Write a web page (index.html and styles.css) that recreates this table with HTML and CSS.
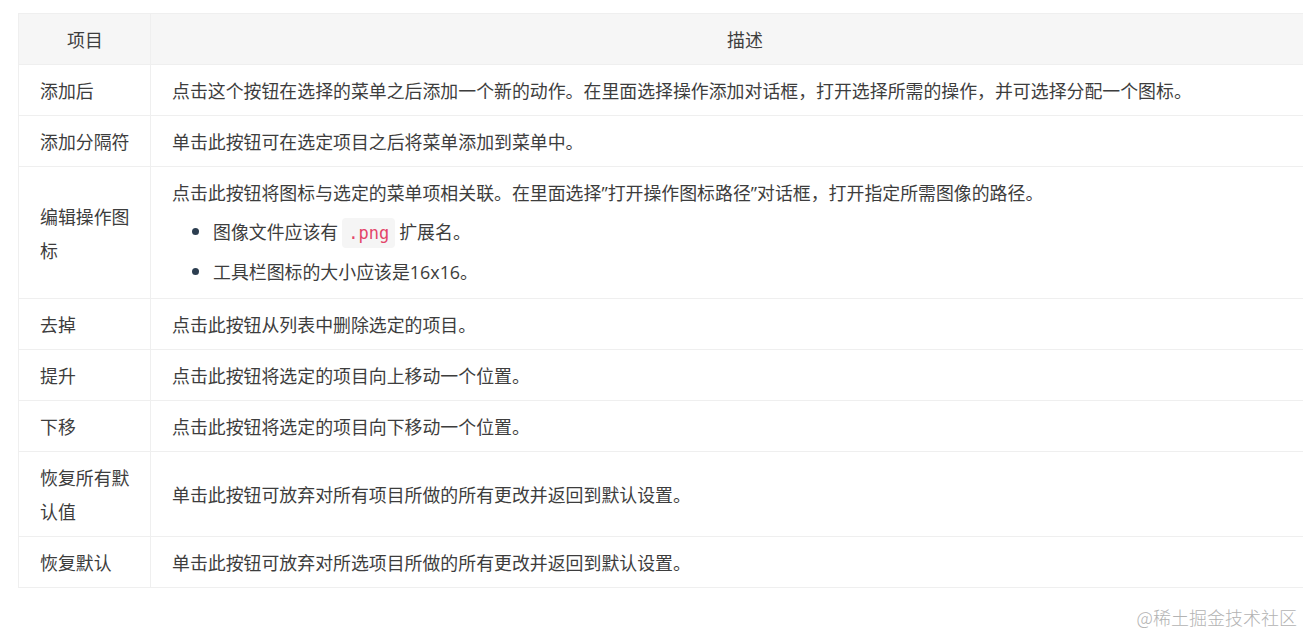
FILE: index.html
```html
<!DOCTYPE html>
<html lang="zh-CN">
<head>
<meta charset="utf-8">
<title>表格</title>
<link rel="stylesheet" href="styles.css">
</head>
<body>
<div class="page">
  <table class="doc-table">
    <thead>
      <tr><th class="col-item">项目</th><th class="col-desc">描述</th></tr>
    </thead>
    <tbody>
      <tr><td class="col-item">添加后</td><td>点击这个按钮在选择的菜单之后添加一个新的动作。在里面选择操作添加对话框，打开选择所需的操作，并可选择分配一个图标。</td></tr>
      <tr><td class="col-item">添加分隔符</td><td>单击此按钮可在选定项目之后将菜单添加到菜单中。</td></tr>
      <tr>
        <td class="col-item">编辑操作图标</td>
        <td>
          <p class="cell-p">点击此按钮将图标与选定的菜单项相关联。在里面选择<span class="latin">”</span>打开操作图标路径<span class="latin">”</span>对话框，打开指定所需图像的路径。</p>
          <ul class="cell-list">
            <li>图像文件应该有 <code class="inline-code">.png</code> 扩展名。</li>
            <li>工具栏图标的大小应该是<span class="latin">16x16</span>。</li>
          </ul>
        </td>
      </tr>
      <tr><td class="col-item">去掉</td><td>点击此按钮从列表中删除选定的项目。</td></tr>
      <tr><td class="col-item">提升</td><td>点击此按钮将选定的项目向上移动一个位置。</td></tr>
      <tr><td class="col-item">下移</td><td>点击此按钮将选定的项目向下移动一个位置。</td></tr>
      <tr><td class="col-item">恢复所有默认值</td><td>单击此按钮可放弃对所有项目所做的所有更改并返回到默认设置。</td></tr>
      <tr><td class="col-item">恢复默认</td><td>单击此按钮可放弃对所选项目所做的所有更改并返回到默认设置。</td></tr>
    </tbody>
  </table>
  <div class="watermark">@稀土掘金技术社区</div>
</div>
</body>
</html>
```

FILE: styles.css
```css
html, body {
  margin: 0;
  padding: 0;
  overflow: hidden;
  background: #fff;
}
.page {
  padding: 13px 0 0 18px;
  width: 1400px;
  font-family: "Noto Sans CJK SC", "Noto Sans", sans-serif;
  color: #3d3d3d;
}
.doc-table {
  border-collapse: collapse;
  table-layout: fixed;
  width: 1322px;
  font-size: 17.9px;
  line-height: 34px;
}
.doc-table th,
.doc-table td {
  border: 1px solid #efefef;
  padding: 8px 21px;
  text-align: left;
  vertical-align: middle;
  font-weight: normal;
}
.doc-table .col-item {
  width: 90px;
  padding-right: 20px;
}
.doc-table th {
  background: #f6f6f6;
  text-align: center;
}
.cell-p { margin: 0; }
.latin { font-family: "Open Sans", "Noto Sans", sans-serif; }
.cell-list {
  margin: 4px 0 1px;
  padding-left: 41px;
}
.cell-list li {
  line-height: 34px;
}
.cell-list li + li { margin-top: 4px; }
.cell-list li::marker { color: #2c3e50; }
.inline-code {
  font-family: "DejaVu Sans Mono", "Liberation Mono", monospace;
  font-size: 17px;
  color: #e3456a;
  background: #f5f5f5;
  border-radius: 4px;
  padding: 5px 6px;
}
.watermark {
  position: absolute;
  right: 6px;
  top: 603px;
  font-size: 18px;
  line-height: 28px;
  color: #b3b3b3;
  font-family: "Noto Sans CJK SC", sans-serif;
  font-weight: 300;
}
```
